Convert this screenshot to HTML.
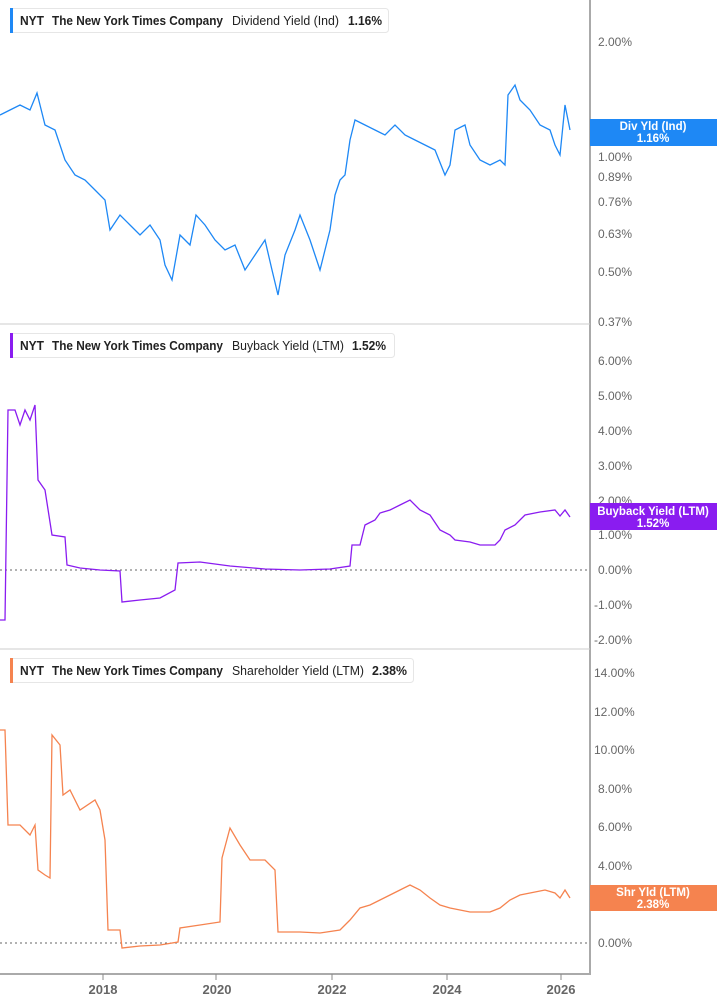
<!DOCTYPE html>
<html><head><meta charset="utf-8"><style>
body{margin:0;width:717px;height:1005px;background:#fff;overflow:hidden;font-family:"Liberation Sans",sans-serif}
svg{display:block}
.ax{font-size:12px;fill:#666}
.yr{font-size:13px;fill:#666;font-weight:bold}
.lg{font-size:12.5px;font-weight:bold;fill:#222}
.lgn{font-size:12.5px;fill:#222}
.bx{font-size:11.5px;font-weight:bold;fill:#fff}
</style></head><body>
<svg width="717" height="1005" viewBox="0 0 717 1005">
<line x1="590" y1="0" x2="590" y2="974" stroke="#aaa" stroke-width="2"/>
<line x1="0" y1="324" x2="590" y2="324" stroke="#ccc"/>
<line x1="0" y1="649" x2="590" y2="649" stroke="#ccc"/>
<line x1="0" y1="974" x2="591" y2="974" stroke="#aaa" stroke-width="2"/>
<line x1="0" y1="570" x2="590" y2="570" stroke="#666" stroke-dasharray="2,3"/>
<line x1="0" y1="943" x2="590" y2="943" stroke="#666" stroke-dasharray="2,3"/>
<g stroke="#888"><line x1="103" y1="974" x2="103" y2="980"/><line x1="216" y1="974" x2="216" y2="980"/><line x1="332" y1="974" x2="332" y2="980"/><line x1="447" y1="974" x2="447" y2="980"/><line x1="561" y1="974" x2="561" y2="980"/></g>
<g class="yr" text-anchor="middle"><text x="103" y="994">2018</text><text x="217" y="994">2020</text><text x="332" y="994">2022</text><text x="447" y="994">2024</text><text x="561" y="994">2026</text></g>
<g class="ax">
<text x="598" y="46">2.00%</text><text x="598" y="161">1.00%</text><text x="598" y="181">0.89%</text><text x="598" y="206">0.76%</text><text x="598" y="238">0.63%</text><text x="598" y="276">0.50%</text><text x="598" y="326">0.37%</text>
<text x="598" y="365">6.00%</text><text x="598" y="400">5.00%</text><text x="598" y="435">4.00%</text><text x="598" y="470">3.00%</text><text x="598" y="505">2.00%</text><text x="598" y="539">1.00%</text><text x="598" y="574">0.00%</text><text x="594" y="609">-1.00%</text><text x="594" y="644">-2.00%</text>
<text x="594" y="677">14.00%</text><text x="594" y="716">12.00%</text><text x="594" y="754">10.00%</text><text x="598" y="793">8.00%</text><text x="598" y="831">6.00%</text><text x="598" y="870">4.00%</text><text x="598" y="908">2.00%</text><text x="598" y="947">0.00%</text>
</g>
<polyline fill="none" stroke="#1e88f5" stroke-width="1.3" points="0,115 10,110 20,105 30,110 37,93 45,125 55,130 65,160 75,175 85,180 95,190 105,200 110,230 120,215 130,225 140,235 150,225 160,240 165,265 172,280 180,235 190,245 196,215 205,225 215,240 225,250 235,245 245,270 255,255 265,240 272,270 278,295 285,255 295,230 300,215 310,240 320,270 330,230 335,195 340,180 345,175 350,140 355,120 365,125 375,130 385,135 395,125 405,135 415,140 425,145 435,150 445,175 450,165 455,130 465,125 470,145 480,160 490,165 500,160 505,165 508,95 515,85 520,100 530,110 540,125 550,130 555,145 560,155 565,105 570,130"/>
<polyline fill="none" stroke="#8a1cf0" stroke-width="1.3" points="0,620 5,620 8,410 15,410 20,425 25,410 30,420 35,405 38,480 45,490 52,535 65,537 67,565 80,568 100,570 120,571 122,602 140,600 160,598 175,590 178,563 200,562 230,566 265,569 300,570 330,569 350,566 352,545 360,545 365,525 375,520 380,513 390,510 400,505 410,500 420,510 430,515 440,530 450,535 455,540 470,542 480,545 495,545 500,540 505,530 515,525 525,515 540,512 555,510 560,516 565,510 570,517"/>
<polyline fill="none" stroke="#f5834f" stroke-width="1.3" points="0,730 5,730 8,825 20,825 30,835 35,825 38,870 45,875 50,878 52,735 60,745 63,795 70,790 80,810 95,800 100,810 105,840 108,930 120,930 122,948 140,946 160,945 178,942 180,928 200,925 220,922 222,858 230,828 240,845 250,860 265,860 275,870 278,932 300,932 320,933 340,930 350,920 360,908 370,905 380,900 390,895 400,890 410,885 420,890 430,898 440,905 450,908 470,912 490,912 500,908 510,900 520,895 530,893 545,890 555,893 560,898 565,890 570,898"/>
<rect x="590" y="119" width="127" height="27" fill="#1e88f5"/>
<text class="bx" x="653" y="130" text-anchor="middle">Div Yld (Ind)</text><text class="bx" x="653" y="142" text-anchor="middle">1.16%</text>
<rect x="590" y="503" width="127" height="27" fill="#8a1cf0"/>
<text class="bx" x="653" y="515" text-anchor="middle">Buyback Yield (LTM)</text><text class="bx" x="653" y="527" text-anchor="middle">1.52%</text>
<rect x="590" y="885" width="127" height="26" fill="#f5834f"/>
<text class="bx" x="653" y="896" text-anchor="middle">Shr Yld (LTM)</text><text class="bx" x="653" y="908" text-anchor="middle">2.38%</text>
<g>
<rect x="10.5" y="8.5" width="378" height="24" rx="3" fill="#fff" stroke="#e6e6e6"/><rect x="10" y="8" width="3" height="25" fill="#1e88f5"/>
<text class="lg" x="20" y="25" textLength="24" lengthAdjust="spacingAndGlyphs">NYT</text><text class="lg" x="52" y="25" textLength="171" lengthAdjust="spacingAndGlyphs">The New York Times Company</text><text class="lgn" x="232" y="25" textLength="107" lengthAdjust="spacingAndGlyphs">Dividend Yield (Ind)</text><text class="lg" x="348" y="25" textLength="34" lengthAdjust="spacingAndGlyphs">1.16%</text>
<rect x="10.5" y="333.5" width="384" height="24" rx="3" fill="#fff" stroke="#e6e6e6"/><rect x="10" y="333" width="3" height="25" fill="#8a1cf0"/>
<text class="lg" x="20" y="350" textLength="24" lengthAdjust="spacingAndGlyphs">NYT</text><text class="lg" x="52" y="350" textLength="171" lengthAdjust="spacingAndGlyphs">The New York Times Company</text><text class="lgn" x="232" y="350" textLength="112" lengthAdjust="spacingAndGlyphs">Buyback Yield (LTM)</text><text class="lg" x="352" y="350" textLength="34" lengthAdjust="spacingAndGlyphs">1.52%</text>
<rect x="10.5" y="658.5" width="403" height="24" rx="3" fill="#fff" stroke="#e6e6e6"/><rect x="10" y="658" width="3" height="25" fill="#f5834f"/>
<text class="lg" x="20" y="675" textLength="24" lengthAdjust="spacingAndGlyphs">NYT</text><text class="lg" x="52" y="675" textLength="171" lengthAdjust="spacingAndGlyphs">The New York Times Company</text><text class="lgn" x="232" y="675" textLength="132" lengthAdjust="spacingAndGlyphs">Shareholder Yield (LTM)</text><text class="lg" x="372" y="675" textLength="35" lengthAdjust="spacingAndGlyphs">2.38%</text>
</g>
</svg>
</body></html>
